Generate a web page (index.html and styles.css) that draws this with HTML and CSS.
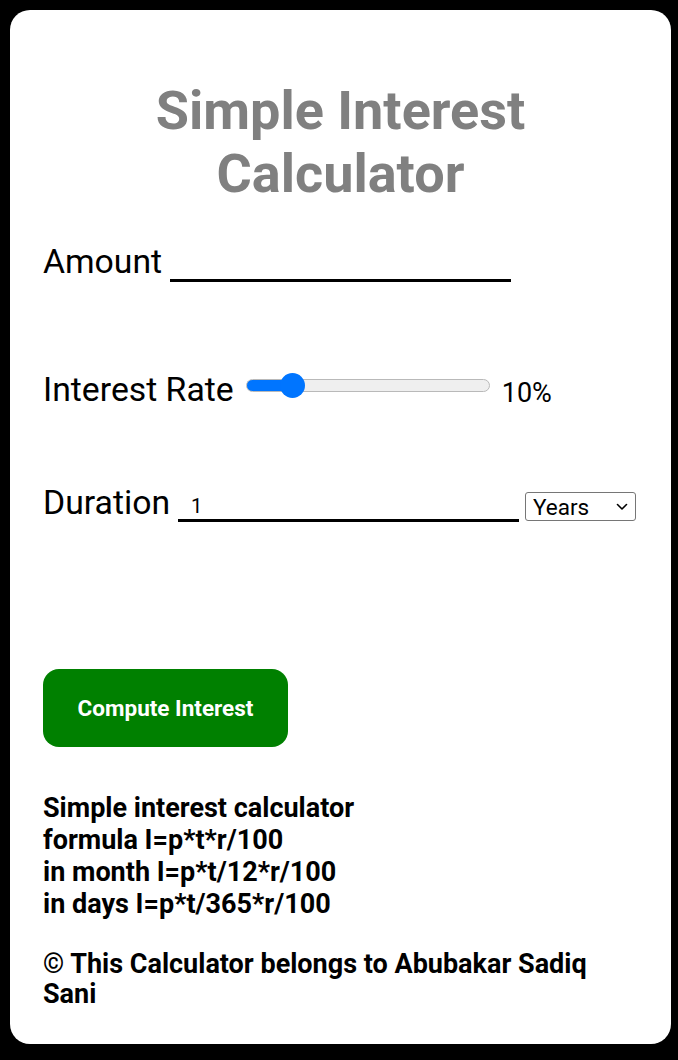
FILE: index.html
```html
<!DOCTYPE html>
<html lang="en">
<head>
<meta charset="utf-8">
<title>Simple Interest Calculator</title>
<link rel="stylesheet" href="styles.css">
</head>
<body>
<main class="card">
  <h1 class="title">Simple Interest Calculator</h1>

  <div class="field field-amount">
    <label class="field-label" for="amount">Amount</label>
    <input class="line-input amount-input" id="amount" type="number">
  </div>

  <div class="field field-rate">
    <label class="field-label" for="rate">Interest Rate</label>
    <input class="rate-slider" id="rate" type="range" min="1" max="60" value="10">
    <span class="rate-value">10%</span>
  </div>

  <div class="field field-duration">
    <label class="field-label" for="duration">Duration</label>
    <input class="line-input duration-input" id="duration" type="number" value="1">
    <span class="select-wrap">
      <select class="unit-select">
        <option>Years</option>
        <option>Months</option>
        <option>Days</option>
      </select>
      <svg class="select-arrow" width="12" height="8" viewBox="0 0 12 8" aria-hidden="true">
        <path d="M1.5 1.5 L6 6 L10.5 1.5" fill="none" stroke="#000" stroke-width="1.6" stroke-linecap="round" stroke-linejoin="round"/>
      </svg>
    </span>
  </div>

  <button class="compute-btn" type="button">Compute Interest</button>

  <p class="info">Simple interest calculator<br>formula I=p*t*r/100<br>in month I=p*t/12*r/100<br>in days I=p*t/365*r/100</p>

  <p class="copyright">© This Calculator belongs to Abubakar Sadiq Sani</p>
</main>
</body>
</html>
```

FILE: styles.css
```css
* {
  box-sizing: border-box;
}

html {
  background: #000;
}

body {
  margin: 0;
  padding: 10px 7px 16px 10px;
  background: #000;
  font-family: Roboto, "Liberation Sans", Arial, sans-serif;
  color: #000;
}

.card {
  background: #fff;
  border-radius: 20px;
  padding: 33px 33px 0;
  height: 1034px;
}

.title {
  margin: 36px 0 37px;
  font-size: 54px;
  line-height: 63px;
  font-weight: 700;
  color: #808080;
  text-align: center;
}

.field {
  display: flex;
}

.field-label {
  font-size: 33.75px;
  line-height: 40px;
  white-space: nowrap;
}

.field-amount {
  align-items: flex-end;
}

.line-input {
  width: 341px;
  height: 36px;
  padding: 6px 13px 0;
  border: 0;
  border-bottom: 3px solid #000;
  border-radius: 0;
  background: transparent;
  font-family: Roboto, "Liberation Sans", Arial, sans-serif;
  font-size: 20.25px;
  color: #000;
  outline: none;
  -moz-appearance: textfield;
}

.line-input::-webkit-outer-spin-button,
.line-input::-webkit-inner-spin-button {
  -webkit-appearance: none;
  margin: 0;
}

.amount-input {
  margin-left: 8px;
}

.field-rate {
  margin-top: 88px;
  align-items: flex-start;
}

.rate-slider {
  -webkit-appearance: none;
  appearance: none;
  width: 244px;
  height: 26px;
  margin: 2px 0 0 12px;
  padding: 0;
  background: transparent;
}

.rate-slider::-webkit-slider-runnable-track {
  height: 13px;
  border: 1px solid #b9b9b9;
  border-radius: 7px;
  background: linear-gradient(to right, #0075ff 0, #0075ff 43px, #efefef 43px);
}

.rate-slider::-webkit-slider-thumb {
  -webkit-appearance: none;
  appearance: none;
  width: 25px;
  height: 25px;
  margin-top: -7px;
  border: 0;
  border-radius: 50%;
  background: #0075ff;
}

.rate-value {
  margin: 7px 0 0 12px;
  font-size: 27px;
  line-height: 32px;
}

.field-duration {
  margin-top: 73px;
  align-items: flex-end;
}

.duration-input {
  margin: 0 0 1px 8px;
}

.select-wrap {
  position: relative;
  display: block;
  margin: 0 0 2px 6px;
}

.unit-select {
  display: block;
  width: 111px;
  height: 29px;
  margin: 0;
  padding: 0 0 0 7px;
  border: 1px solid #767676;
  border-radius: 3px;
  background: #fff;
  font-family: Roboto, "Liberation Sans", Arial, sans-serif;
  font-size: 22.5px;
  color: #000;
  -webkit-appearance: none;
  appearance: none;
  outline: none;
}

.select-arrow {
  position: absolute;
  right: 8px;
  top: 11px;
  pointer-events: none;
}

.compute-btn {
  display: block;
  width: 245px;
  height: 78px;
  margin-top: 146px;
  padding: 0;
  border: 0;
  border-radius: 16px;
  background: #008000;
  color: #fff;
  font-family: Roboto, "Liberation Sans", Arial, sans-serif;
  font-size: 22.5px;
  font-weight: 700;
}

.info {
  margin: 45px 0 0;
  font-size: 27px;
  line-height: 32px;
  font-weight: 700;
}

.copyright {
  margin: 29px 0 0;
  font-size: 27px;
  line-height: 30px;
  font-weight: 700;
}
```
